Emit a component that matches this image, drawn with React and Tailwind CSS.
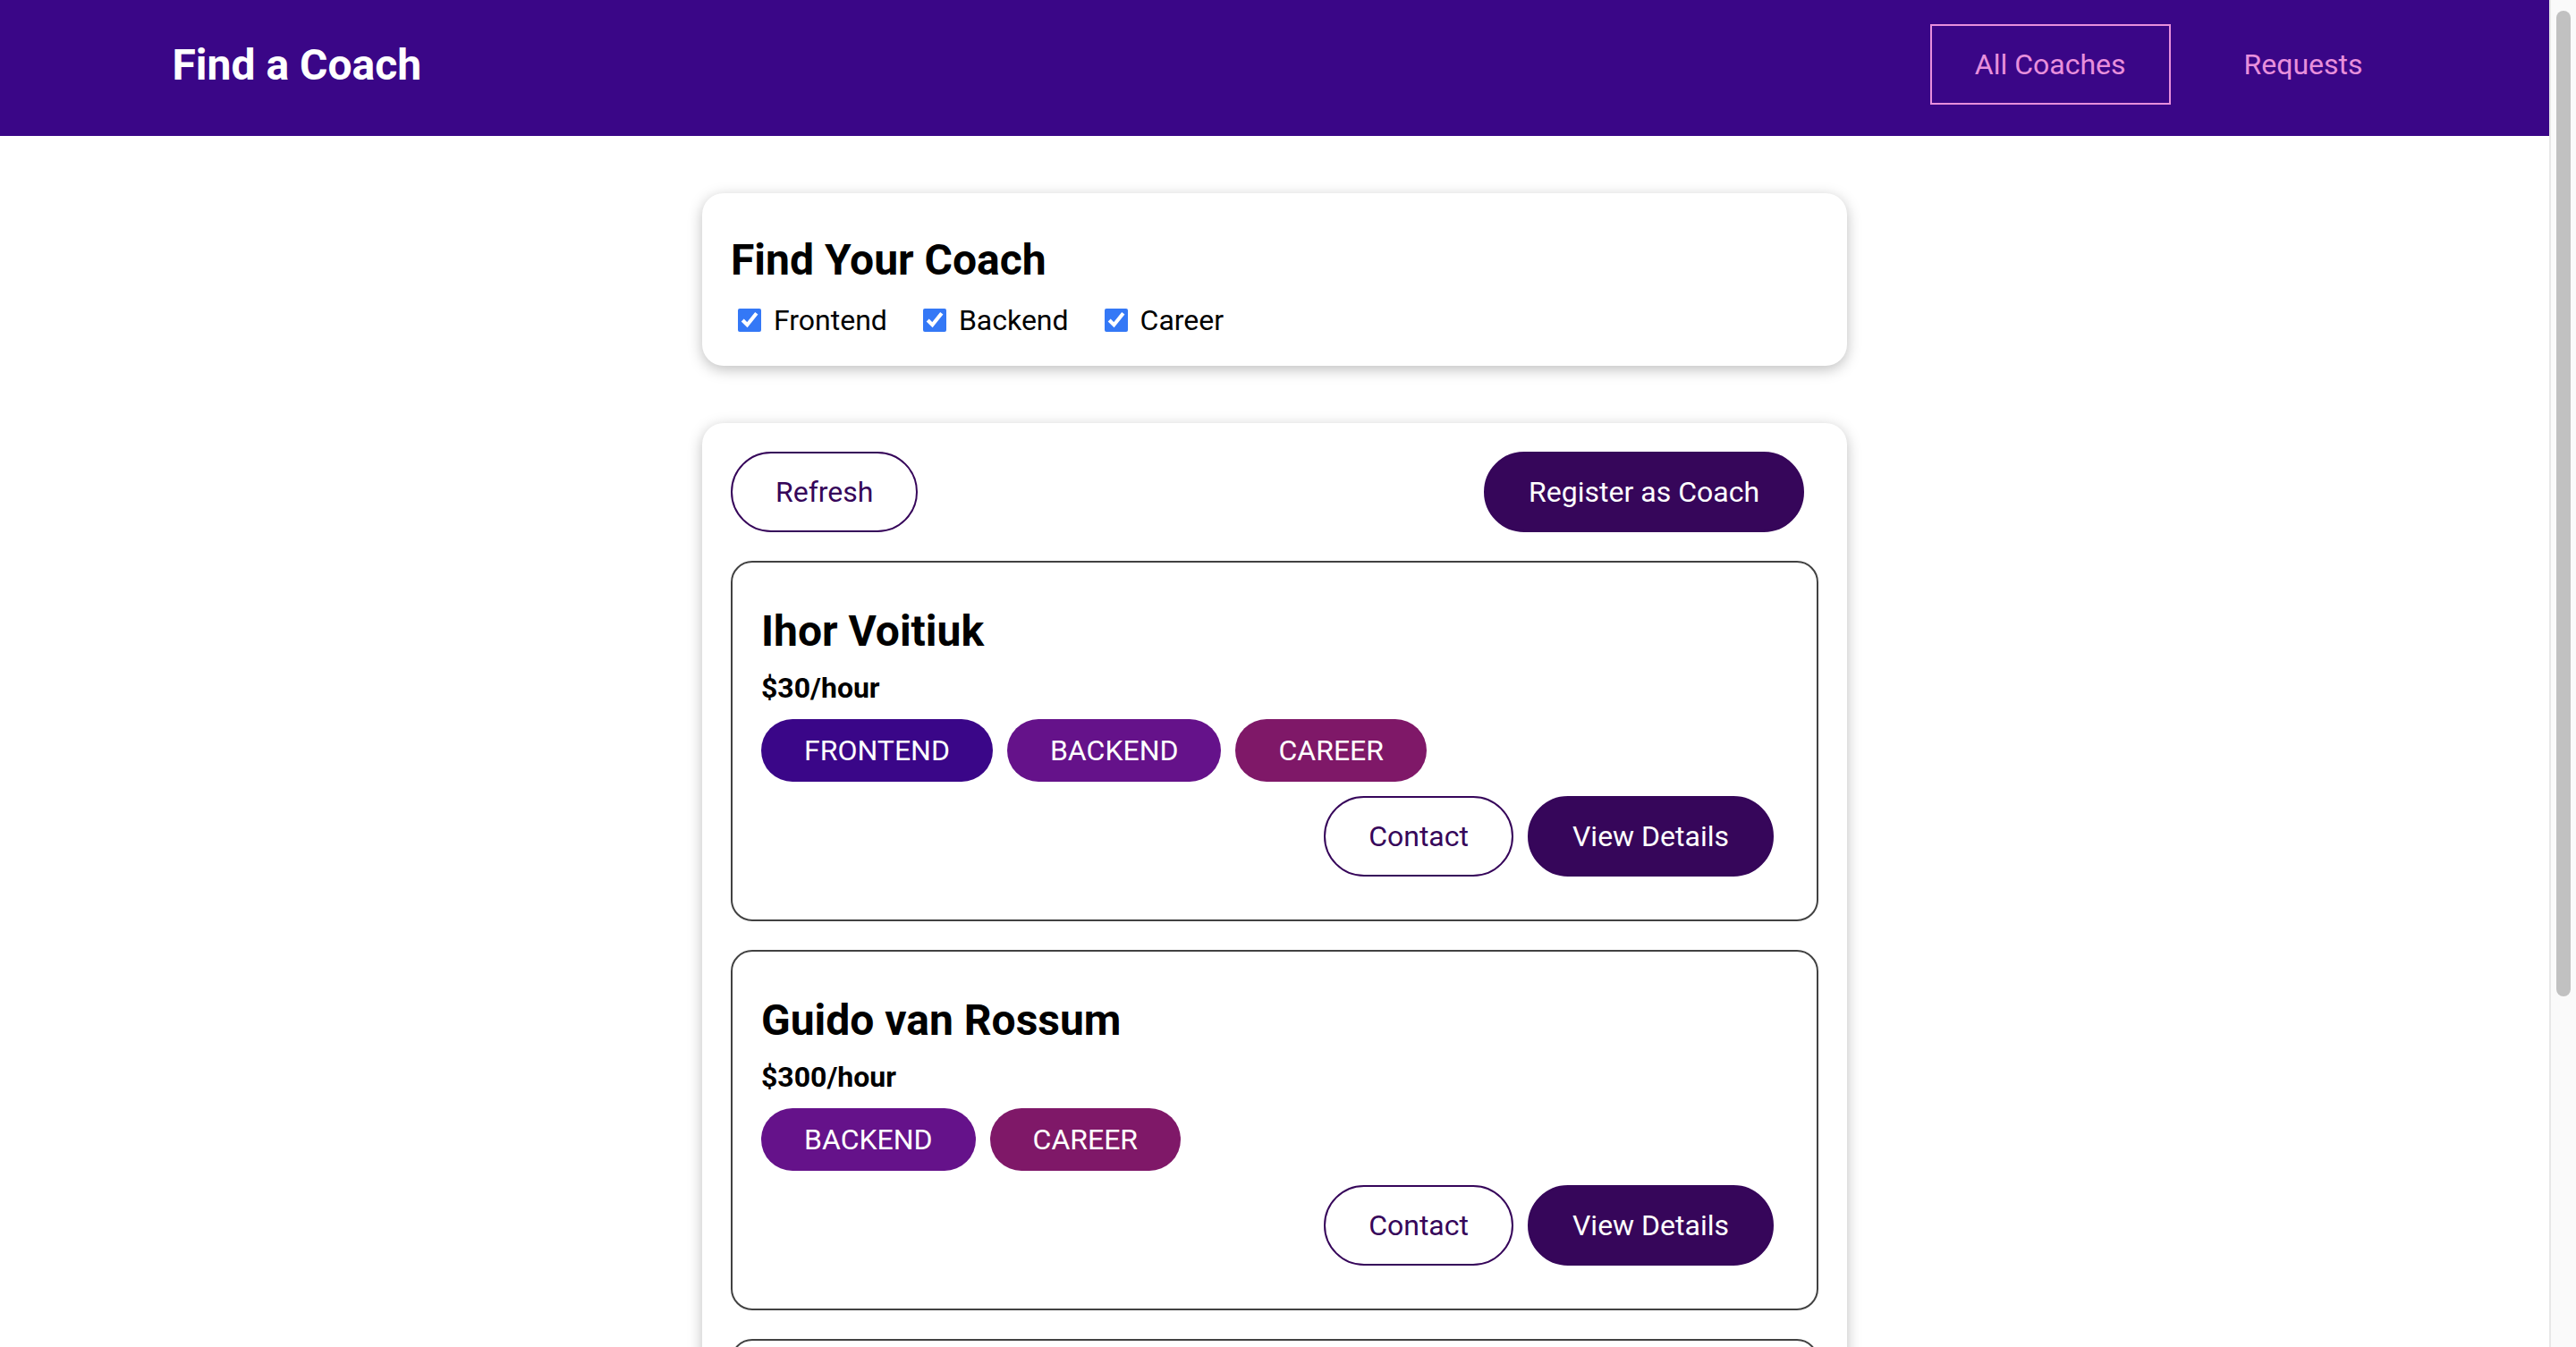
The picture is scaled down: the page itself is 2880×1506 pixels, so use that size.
const COACHES = [
  { id: "c1", name: "Ihor Voitiuk", rate: 30, areas: ["frontend", "backend", "career"] },
  { id: "c2", name: "Guido van Rossum", rate: 300, areas: ["backend", "career"] },
  { id: "c3", name: "Maximilian Schwarzmüller", rate: 30, areas: ["frontend", "career"] },
];

const BADGE = {
  frontend: "bg-[#3a0688]",
  backend: "bg-[#65128a]",
  career: "bg-[#7f1868]",
};

function Button({ outline = false, children }) {
  return (
    <button
      type="button"
      className={`inline-block px-[48px] py-[24px] mr-[16px] rounded-[60px] border-2 border-[#36065a] text-[32px] leading-[normal] cursor-pointer ${
        outline ? "bg-transparent text-[#36065a]" : "bg-[#36065a] text-white"
      }`}
    >
      {children}
    </button>
  );
}

function Card({ children }) {
  return (
    <section className="max-w-[1280px] mx-auto my-[64px] p-[32px] rounded-[24px] bg-white shadow-[0_4px_16px_rgba(0,0,0,0.26)]">
      {children}
    </section>
  );
}

function FilterOption({ label }) {
  return (
    <div className="flex items-center mr-[32px]">
      <input
        type="checkbox"
        defaultChecked
        className="w-[26px] h-[26px] ml-[8px] mr-[6px] my-[6px] accent-[#3478f6]"
      />
      <label className="ml-[8px]">{label}</label>
    </div>
  );
}

function CoachItem({ coach }) {
  return (
    <li className="my-[32px] border-2 border-[#424242] rounded-[24px] p-[32px]">
      <h3 className="my-[16px] text-[48px] font-bold">{coach.name}</h3>
      <h4 className="my-[16px] text-[32px] font-bold">${coach.rate}/hour</h4>
      <div className="my-[16px] flex">
        {coach.areas.map((area) => (
          <span
            key={area}
            className={`inline-block mr-[16px] px-[48px] py-[16px] rounded-[60px] text-white uppercase ${BADGE[area]}`}
          >
            {area}
          </span>
        ))}
      </div>
      <div className="my-[16px] flex justify-end">
        <Button outline>Contact</Button>
        <Button>View Details</Button>
      </div>
    </li>
  );
}

export default function App() {
  return (
    <div className="flex h-screen overflow-hidden bg-white text-black text-[32px] leading-[normal] font-['Roboto',sans-serif]">
      <div className="flex-1 min-w-0 overflow-hidden">
        <header className="w-full h-[152px] pb-[8px] bg-[#3a0687] flex items-center">
          <nav className="w-[90%] mx-auto flex justify-between items-center">
            <h1 className="m-0 text-[48px] font-bold">
              <a href="#" className="inline-block px-[48px] py-[24px] border-2 border-transparent text-white">
                Find a Coach
              </a>
            </h1>
            <ul className="flex items-center">
              <li className="mx-[16px]">
                <a href="#" className="inline-block px-[48px] py-[24px] border-2 border-[#e88fdc] text-[#e88fdc]">
                  All Coaches
                </a>
              </li>
              <li className="mx-[16px]">
                <a href="#" className="inline-block px-[48px] py-[24px] border-2 border-transparent text-[#e88fdc]">
                  Requests
                </a>
              </li>
            </ul>
          </nav>
        </header>

        <main>
          <Card>
            <h2 className="mt-[14px] mb-[20px] text-[48px] font-bold">Find Your Coach</h2>
            <div className="flex items-center">
              <FilterOption label="Frontend" />
              <FilterOption label="Backend" />
              <FilterOption label="Career" />
            </div>
          </Card>

          <Card>
            <div className="flex justify-between">
              <Button outline>Refresh</Button>
              <Button>Register as Coach</Button>
            </div>
            <ul>
              {COACHES.map((coach) => (
                <CoachItem key={coach.id} coach={coach} />
              ))}
            </ul>
          </Card>
        </main>
      </div>

      {/* page scrollbar */}
      <div className="w-[30px] shrink-0 bg-[#fafafa] border-l-2 border-[#e8e8e8] flex justify-center pt-[12px]">
        <div className="w-[16px] h-[1102px] rounded-full bg-[#c1c1c1]" />
      </div>
    </div>
  );
}
